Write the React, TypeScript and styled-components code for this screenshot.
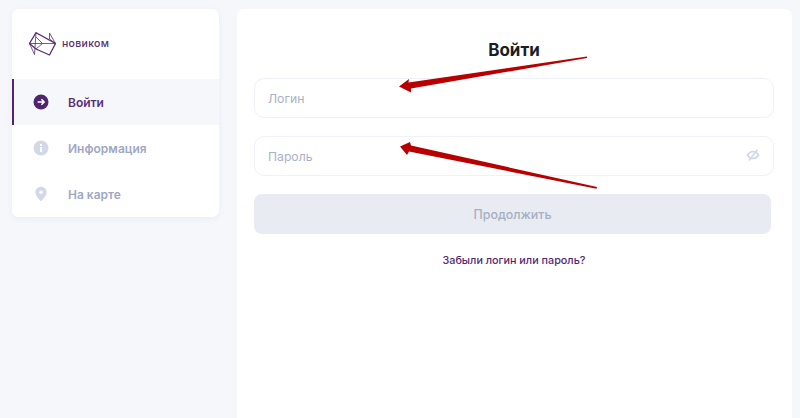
import React from "react";
import styled, { createGlobalStyle } from "styled-components";

const Global = createGlobalStyle`
  html, body { margin: 0; padding: 0; height: 100%; background: #f5f7fb; overflow: hidden; }
  #root { height: 100%; }
  * { box-sizing: border-box; }
`;

const Page = styled.div`
  position: relative;
  display: flex;
  align-items: flex-start;
  gap: 18px;
  height: 418px;
  padding: 9px 8px 0 12px;
  font-family: Inter, "Noto Sans", sans-serif;
`;

const Sidebar = styled.aside`
  width: 207px;
  height: 208px;
  flex: none;
  background: #fff;
  border-radius: 7px;
  overflow: hidden;
  box-shadow: 0 2px 6px rgba(170, 180, 210, 0.14);
`;

const Brand = styled.div`
  height: 70px;
  display: flex;
  align-items: center;
  gap: 6px;
  padding: 0 0 0 17px;
`;

const BrandName = styled.span`
  font-size: 10.5px;
  font-weight: 500;
  letter-spacing: 0.3px;
  color: #57306f;
  padding-bottom: 1px;
`;

const NavItem = styled.div<{ $active?: boolean }>`
  height: 46px;
  display: flex;
  align-items: center;
  gap: 19px;
  padding-left: ${(p) => (p.$active ? "19px" : "21px")};
  background: ${(p) => (p.$active ? "#f5f7fb" : "#fff")};
  border-left: ${(p) => (p.$active ? "2px solid #52246f" : "none")};
  color: ${(p) => (p.$active ? "#5a2f78" : "#9fa8c3")};
  font-size: 12px;
  font-weight: 600;
`;

const Main = styled.main`
  flex: 1;
  height: 409px;
  background: #fff;
  border-radius: 7px 7px 0 0;
  padding: 31px 18px 0 17px;
`;

const Title = styled.h1`
  margin: 0 0 18px;
  height: 20px;
  line-height: 20px;
  text-align: center;
  font-size: 17px;
  font-weight: 700;
  color: #1c1e26;
`;

const Field = styled.div`
  height: 40px;
  margin-bottom: 18px;
  display: flex;
  align-items: center;
  justify-content: space-between;
  padding: 0 13px;
  border: 1px solid #f0f1f8;
  border-radius: 10px;
  background: #fff;
  color: #a9b1c6;
  font-size: 12.2px;
`;

const Submit = styled.div`
  width: 517px;
  height: 40px;
  border-radius: 8px;
  background: #e8ebf2;
  color: #a6afc2;
  display: flex;
  align-items: center;
  justify-content: center;
  font-size: 12.4px;
  font-weight: 500;
`;

const Forgot = styled.div`
  margin-top: 19px;
  text-align: center;
  color: #55286f;
  font-size: 10.8px;
  font-weight: 500;
  line-height: 15px;
`;

const EyeSlot = styled.svg`
  margin: -2px 0 0 0;
`;

const Arrows = styled.svg`
  position: absolute;
  left: 0;
  top: 0;
  pointer-events: none;
`;

const Logo = () => (
  <svg width="27" height="24" viewBox="0 0 27 24" fill="none" stroke="#5a2f78">
    <path d="M.5 11.500 L7 .7 L26.500 11.500 L20.500 23 L7 17 Z" strokeWidth="1.300" />
    <path d="M.5 11.500 L26.500 11.500 M7 17 L13.500 11.500 L7 5 M20.500 1 L26.500 11.500 L20.500 7 Z M7 .7 L5.500 22.500 L.5 11.500" strokeWidth="0.800" />
  </svg>
);

const ArrowIcon = () => (
  <svg width="16" height="16" viewBox="0 0 16 16">
    <circle cx="8" cy="8" r="7.500" fill="#4f2570" />
    <path d="M4.600 8 H11 M8.400 5.300 L11.100 8 L8.400 10.700" fill="none" stroke="#fff" strokeWidth="1.600" />
  </svg>
);

const InfoIcon = () => (
  <svg width="16" height="16" viewBox="0 0 16 16">
    <circle cx="8" cy="8" r="7.500" fill="#d3d8e8" />
    <path d="M7 7h2v5H7z M7 4h2v2H7z" fill="#fff" />
  </svg>
);

const PinIcon = () => (
  <svg width="16" height="16" viewBox="0 0 16 16">
    <path d="M8 .8c3.200 0 5.600 2.400 5.600 5.500C13.600 9.800 10 13.200 8 15.300 6 13.200 2.400 9.800 2.400 6.300 2.400 3.200 4.800.8 8 .8z" fill="#d3d8e8" />
    <circle cx="8" cy="6.200" r="1.800" fill="#fff" />
  </svg>
);

const EyeOff = () => (
  <EyeSlot width="14" height="14" viewBox="0 0 14 14" fill="none" stroke="#d2d7e8" strokeWidth="1.500">
    <path d="M1.500 7c1.400-2.400 3.200-3.500 5.500-3.500s4.100 1.100 5.500 3.500c-1.400 2.400-3.200 3.500-5.500 3.500S2.900 9.400 1.500 7z" />
    <path d="M11.500 1.500 3 12.500" />
  </EyeSlot>
);

export default function App() {
  return (
    <>
      <Global />
      <Page>
        <Sidebar>
          <Brand>
            <Logo />
            <BrandName>новиком</BrandName>
          </Brand>
          <NavItem $active>
            <ArrowIcon />
            Войти
          </NavItem>
          <NavItem>
            <InfoIcon />
            Информация
          </NavItem>
          <NavItem>
            <PinIcon />
            На карте
          </NavItem>
        </Sidebar>
        <Main>
          <Title>Войти</Title>
          <Field>Логин</Field>
          <Field>
            Пароль
            <EyeOff />
          </Field>
          <Submit>Продолжить</Submit>
          <Forgot>Забыли логин или пароль?</Forgot>
        </Main>
        <Arrows width="800" height="418" viewBox="0 0 800 418">
          <path d="M399 86.500 L409 79 L408.500 82.500 L587 56.500 L587 58 L411 88.500 L411 92.500 Z" fill="#b80000" />
          <path d="M400 146.500 L410 142 L411 145.500 L597 187 L596.500 188.700 L409 151.500 L407 155 Z" fill="#b80000" />
        </Arrows>
      </Page>
    </>
  );
}
